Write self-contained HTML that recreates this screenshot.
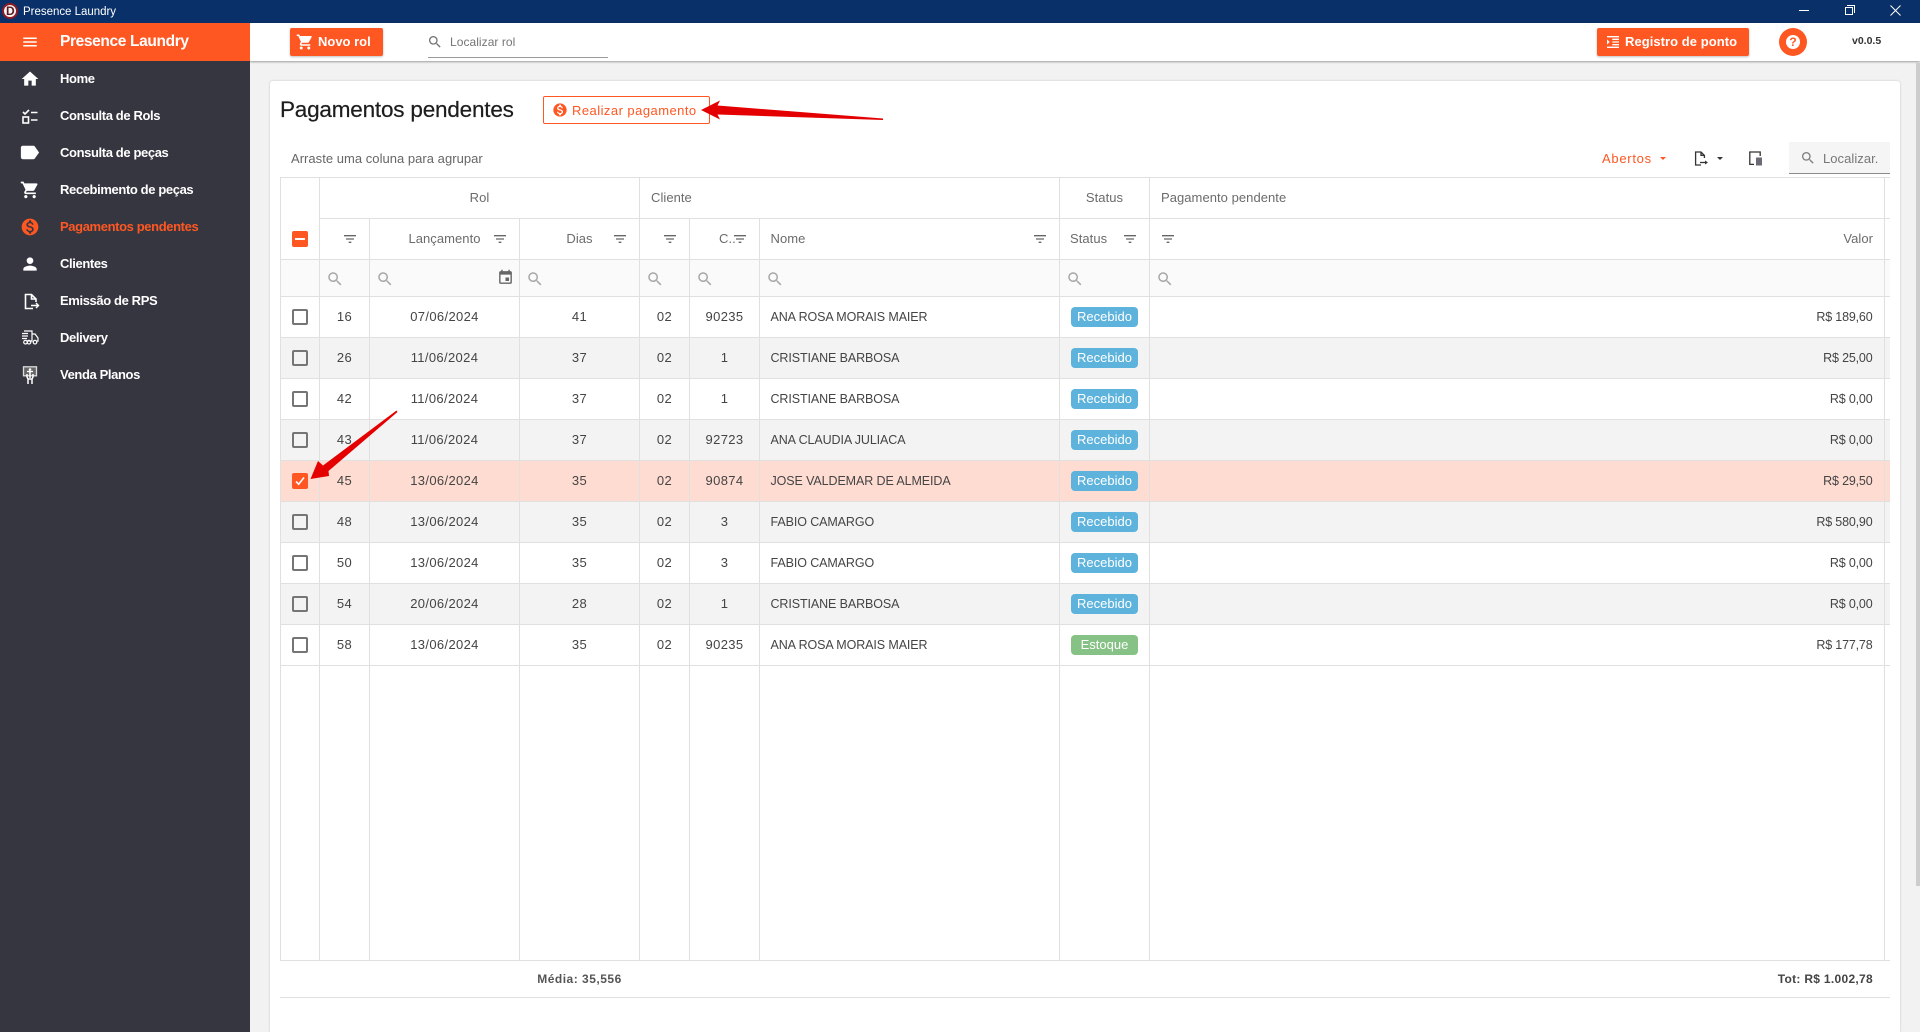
<!DOCTYPE html>
<html lang="pt-BR"><head><meta charset="utf-8"><title>Presence Laundry</title>
<style>
*{box-sizing:border-box}
html,body{margin:0;padding:0;width:1920px;height:1032px;overflow:hidden;background:#f2f2f2;font-family:"Liberation Sans",sans-serif;color:#444}
.a,.t,.l,.h,svg{position:absolute}
.t{white-space:nowrap;line-height:16px;height:16px}
.l{background:#e0e0e0}
.h{background:#e0e0e0;height:1px}
svg{display:block}
.m{left:60px;font-weight:700;font-size:13px;color:#fff;letter-spacing:-.38px}
.s{left:0;width:250px;height:1px;background:#4c4c55}
.hd{font-size:13px;color:#6b6b6b;letter-spacing:.05px;text-align:center}
.rw{position:absolute;left:281px;width:1609px;height:40px}
.g{background:#f3f3f3}
.rw .t{top:12px;font-size:13px;color:#444;letter-spacing:.35px;text-align:center}
.c1{left:39px;width:49px}.c2{left:89px;width:149px}.c3{left:239px;width:119px}.c4{left:359px;width:49px}.c5{left:409px;width:69px}
.rw .c6{left:489.5px;text-align:left;letter-spacing:-.1px;font-size:12.5px}
.rw .c7{right:17.5px;text-align:right;letter-spacing:-.17px;font-size:12.5px}
.b{position:absolute;left:790px;top:10px;width:67px;height:20px;border-radius:4px;background:#5eb3dc;color:#fff;font-size:13px;line-height:20px;text-align:center;letter-spacing:0}
.e{background:#86c285}
.cb{position:absolute;left:11px;top:12px;width:16px;height:16px;border:2px solid #757575;border-radius:2px;background:transparent}
</style></head><body>
<svg width="0" height="0" style="position:absolute"><defs>
<path id="ms" d="M15.5 14h-.79l-.28-.27C15.41 12.59 16 11.11 16 9.5 16 5.91 13.09 3 9.5 3S3 5.91 3 9.5 5.91 16 9.5 16c1.61 0 3.09-.59 4.23-1.57l.27.28v.79l5 4.99L20.49 19l-4.99-5zm-6 0C7.01 14 5 11.99 5 9.5S7.01 5 9.5 5 14 7.01 14 9.5 11.99 14 9.5 14z"/>
<path id="mf" d="M10 18h4v-2h-4v2zM3 6v2h18V6H3zm3 7h12v-2H6v2z"/>
<path id="mm" d="M12 2C6.48 2 2 6.48 2 12s4.48 10 10 10 10-4.48 10-10S17.52 2 12 2zm1.41 16.09V20h-2.67v-1.93c-1.71-.36-3.16-1.46-3.27-3.4h1.96c.1 1.05.82 1.87 2.65 1.87 1.96 0 2.4-.98 2.4-1.59 0-.83-.44-1.61-2.67-2.14-2.48-.6-4.18-1.62-4.18-3.67 0-1.72 1.39-2.84 3.11-3.21V4h2.67v1.95c1.86.45 2.79 1.86 2.85 3.39H14.3c-.05-1.11-.64-1.87-2.22-1.87-1.5 0-2.4.68-2.4 1.64 0 .84.65 1.39 2.67 1.91s4.18 1.39 4.18 3.91c-.01 1.83-1.38 2.83-3.12 3.16z"/>
<path id="mc" d="M7 18c-1.1 0-1.99.9-1.99 2S5.9 22 7 22s2-.9 2-2-.9-2-2-2zM1 2v2h2l3.6 7.59-1.35 2.45c-.16.28-.25.61-.25.96 0 1.1.9 2 2 2h12v-2H7.42c-.14 0-.25-.11-.25-.25l.03-.12.9-1.63h7.45c.75 0 1.41-.41 1.75-1.03l3.58-6.49c.08-.14.12-.31.12-.48 0-.55-.45-1-1-1H5.21l-.94-2H1zm16 16c-1.1 0-1.99.9-1.99 2s.89 2 1.99 2 2-.9 2-2-.9-2-2-2z"/>
</defs></svg>

<!-- title bar -->
<div class="a" style="left:0;top:0;width:1920px;height:23px;background:#093068"></div>
<div class="a" style="left:2px;top:3px;width:16px;height:16px;border-radius:50%;background:#8c1c24"></div>
<div class="a" style="left:4px;top:5px;width:12px;height:12px;border-radius:50%;background:#f4f4f4"></div>
<div class="t" style="left:6px;top:3px;font-size:12px;font-weight:700;color:#5a1a22">D</div>
<div class="t" style="left:23px;top:4px;font-size:11.5px;color:#fff;letter-spacing:-.02px">Presence Laundry</div>
<div class="a" style="left:1799px;top:10px;width:10px;height:1px;background:#fff"></div>
<div class="a" style="left:1845px;top:7px;width:8px;height:8px;border:1px solid #fff"></div>
<div class="a" style="left:1847px;top:5px;width:8px;height:8px;border:1px solid #fff;border-left:0;border-bottom:0"></div>
<svg style="left:1890px;top:5px" width="11" height="11" viewBox="0 0 11 11"><path d="M.5.5l10 10M10.5.5l-10 10" stroke="#fff" fill="none"/></svg>

<!-- header -->
<div class="a" style="left:250px;top:23px;width:1670px;height:38px;background:#fff;box-shadow:0 1px 2px rgba(0,0,0,.35)"></div>
<div class="a" style="left:290px;top:28px;width:93px;height:28px;background:#ff5722;border-radius:2px;box-shadow:0 1px 2px rgba(0,0,0,.25)"></div>
<svg style="left:296px;top:33px" width="18" height="18" viewBox="0 0 24 24" fill="#fff"><use href="#mc"/></svg>
<div class="t" style="left:318px;top:34px;font-size:13px;font-weight:700;color:#fff">Novo rol</div>
<svg style="left:427px;top:34px" width="16" height="16" viewBox="0 0 24 24" fill="#757575"><use href="#ms"/></svg>
<div class="t" style="left:450px;top:34px;font-size:12px;color:#757575;letter-spacing:.05px">Localizar rol</div>
<div class="a" style="left:428px;top:57px;width:180px;height:1px;background:#999"></div>
<div class="a" style="left:1597px;top:28px;width:152px;height:28px;background:#ff5722;border-radius:2px;box-shadow:0 1px 2px rgba(0,0,0,.25)"></div>
<svg style="left:1605px;top:34px" width="16" height="16" viewBox="0 0 24 24" fill="#fff"><path d="M3 21h18v-2H3v2zM3 8v8l4-4-4-4zm8 9h10v-2H11v2zM3 3v2h18V3H3zm8 6h10V7H11v2zm0 4h10v-2H11v2z"/></svg>
<div class="t" style="left:1625px;top:34px;font-size:13px;font-weight:700;color:#fff;letter-spacing:.05px">Registro de ponto</div>
<div class="a" style="left:1779px;top:28px;width:28px;height:28px;border-radius:50%;background:#ff5722"></div>
<div class="a" style="left:1786px;top:35px;width:14px;height:14px;border-radius:50%;background:#fff"></div>
<div class="t" style="left:1786px;top:34px;width:14px;text-align:center;font-size:12px;font-weight:700;color:#ff5722">?</div>
<div class="t" style="left:1852px;top:33px;font-size:10.5px;font-weight:700;color:#333">v0.0.5</div>

<!-- sidebar -->
<div class="a" style="left:0;top:23px;width:250px;height:1009px;background:#363640"></div>
<div class="a" style="left:0;top:23px;width:250px;height:38px;background:#ff5722"></div>
<svg style="left:21px;top:33px" width="18" height="18" viewBox="0 0 24 24" fill="#fff"><path d="M3 18h18v-2H3v2zm0-5h18v-2H3v2zm0-7v2h18V6H3z"/></svg>
<div class="t" style="left:60px;top:34px;font-size:15.5px;font-weight:700;color:#fff;letter-spacing:-.36px">Presence Laundry</div>
<div class="s" style="top:97px"></div><div class="s" style="top:134px"></div><div class="s" style="top:171px"></div><div class="s" style="top:208px"></div><div class="s" style="top:245px"></div><div class="s" style="top:282px"></div><div class="s" style="top:319px"></div><div class="s" style="top:356px"></div><div class="s" style="top:393px"></div>
<div class="t m" style="top:71px">Home</div>
<div class="t m" style="top:108px">Consulta de Rols</div>
<div class="t m" style="top:145px">Consulta de peças</div>
<div class="t m" style="top:182px">Recebimento de peças</div>
<div class="t m" style="top:219px;color:#ff5722">Pagamentos pendentes</div>
<div class="t m" style="top:256px">Clientes</div>
<div class="t m" style="top:293px">Emissão de RPS</div>
<div class="t m" style="top:330px">Delivery</div>
<div class="t m" style="top:367px">Venda Planos</div>
<svg style="left:20px;top:69px" width="20" height="20" viewBox="0 0 24 24" fill="#fff"><path d="M10 20v-6h4v6h5v-8h3L12 3 2 12h3v8z"/></svg>
<svg style="left:22px;top:109px" width="16" height="15" viewBox="0 0 16 15"><path d="M1 3l2 2 4-4M9 3.5h6.5M9 11h6.5" stroke="#fff" stroke-width="1.6" fill="none"/><rect x="1" y="8" width="5.5" height="6" stroke="#fff" stroke-width="1.6" fill="none"/></svg>
<svg style="left:18px;top:141px" width="23" height="23" viewBox="0 0 24 24" fill="#fff"><path d="M17.63 5.84C17.27 5.33 16.67 5 16 5L5 5.01C3.9 5.01 3 5.9 3 7v10c0 1.1.9 1.99 2 1.99L16 19c.67 0 1.27-.33 1.63-.84L22 12l-4.37-6.16z"/></svg>
<svg style="left:20px;top:180px" width="20" height="20" viewBox="0 0 24 24" fill="#fff"><use href="#mc"/></svg>
<svg style="left:20px;top:217px" width="20" height="20" viewBox="0 0 24 24" fill="#ff5722"><use href="#mm"/></svg>
<svg style="left:20px;top:254px" width="20" height="20" viewBox="0 0 24 24" fill="#fff"><path d="M12 12c2.21 0 4-1.79 4-4s-1.79-4-4-4-4 1.79-4 4 1.79 4 4 4zm0 2c-2.67 0-8 1.34-8 4v2h16v-2c0-2.66-5.33-4-8-4z"/></svg>
<svg style="left:24px;top:293px" width="16" height="17" viewBox="0 0 16 17"><path d="M9 15.5H1.5V1.5H7.5L12 6v3M7.5 1.5V6H12" stroke="#fff" stroke-width="1.6" fill="none"/><path d="M7 12.5h7M12 10l2.5 2.5L12 15" stroke="#fff" stroke-width="1.4" fill="none"/></svg>
<svg style="left:22px;top:330px" width="17" height="15" viewBox="0 0 17 15" fill="none" stroke="#fff" stroke-width="1.2"><path d="M2 1h8v10H5M10 4h3l3 4v3h-1M8 11h2"/><path d="M0 3.5h6M0 6h6M0 8.5h5"/><circle cx="3.5" cy="12.2" r="1.8"/><circle cx="7" cy="12.2" r="1.8"/><circle cx="13" cy="12.2" r="1.8"/></svg>
<svg style="left:22px;top:366px" width="16" height="19" viewBox="0 0 16 19" fill="none" stroke="#ddd" stroke-width="1.3"><rect x="1.5" y=".8" width="13" height="9" fill="#666"/><path d="M5 5.5h6" stroke="#fff"/><circle cx="8" cy="3.5" r="1.3" fill="#fff" stroke="none"/><path d="M5 8v3l1 2v5M11 8v3l-1 2v5M6 13h4M8 6v6" stroke="#fff" stroke-width="1.5"/></svg>

<!-- scrollbar + card -->
<div class="a" style="left:1916px;top:63px;width:4px;height:823px;background:#cdcdcd"></div>
<div class="a" style="left:270px;top:81px;width:1630px;height:951px;background:#fff;border-radius:3px 3px 0 0;box-shadow:0 0 2px rgba(0,0,0,.2)"></div>

<div class="t" style="left:280px;top:96px;height:28px;line-height:28px;font-size:22.5px;color:#1d1d1d;letter-spacing:-.2px;-webkit-text-stroke:.2px #1d1d1d">Pagamentos pendentes</div>
<div class="a" style="left:543px;top:96px;width:167px;height:28px;border:1px solid #ff5722;border-radius:2px;background:#fff"></div>
<svg style="left:552px;top:102px" width="16" height="16" viewBox="0 0 24 24" fill="#ff5722"><use href="#mm"/></svg>
<div class="t" style="left:572px;top:102.5px;font-size:13px;color:#ff5722;letter-spacing:.46px">Realizar pagamento</div>

<div class="t" style="left:291px;top:151px;font-size:13px;color:#666;letter-spacing:.03px">Arraste uma coluna para agrupar</div>
<div class="t" style="left:1602px;top:151px;font-size:13px;color:#ff5722;letter-spacing:.72px">Abertos</div>
<svg style="left:1660px;top:157px" width="6" height="3" viewBox="0 0 8 4"><path d="M0 0h8L4 4z" fill="#ff5722"/></svg>
<svg style="left:1694px;top:151px" width="15" height="15" viewBox="0 0 15 15" fill="none" stroke="#333" stroke-width="1.3"><path d="M7 14H1.6V1H7l3.4 3.4V7M7 1v3.4h3.4"/><path d="M6 11.5h6" stroke-width="1.3"/><path d="M11 9.5l3 2-3 2z" fill="#333" stroke="none"/></svg>
<svg style="left:1717px;top:157px" width="6" height="3" viewBox="0 0 8 4"><path d="M0 0h8L4 4z" fill="#333"/></svg>
<svg style="left:1749px;top:151px" width="14" height="15" viewBox="0 0 14 15"><path d="M5 13.4H.8V1h10.4v4" stroke="#333" stroke-width="1.3" fill="none"/><rect x="7" y="6.5" width="6" height="8" fill="#6b6b75"/></svg>
<div class="a" style="left:1789px;top:142px;width:101px;height:32px;background:#f5f5f5;border-bottom:1px solid #8a8a8a"></div>
<svg style="left:1800px;top:150px" width="16" height="16" viewBox="0 0 24 24" fill="#808080"><use href="#ms"/></svg>
<div class="t" style="left:1823px;top:151px;font-size:13px;color:#777;letter-spacing:.05px">Localizar.</div>

<!-- table backgrounds -->
<div class="a" style="left:281px;top:260px;width:1609px;height:36px;background:#fafafa"></div>

<!-- rows -->
<div class="rw" style="top:297px"><span class="cb"></span><span class="t c1">16</span><span class="t c2">07/06/2024</span><span class="t c3">41</span><span class="t c4">02</span><span class="t c5">90235</span><span class="t c6">ANA ROSA MORAIS MAIER</span><span class="b">Recebido</span><span class="t c7">R$ 189,60</span></div>
<div class="rw g" style="top:338px"><span class="cb"></span><span class="t c1">26</span><span class="t c2">11/06/2024</span><span class="t c3">37</span><span class="t c4">02</span><span class="t c5">1</span><span class="t c6">CRISTIANE BARBOSA</span><span class="b">Recebido</span><span class="t c7">R$ 25,00</span></div>
<div class="rw" style="top:379px"><span class="cb"></span><span class="t c1">42</span><span class="t c2">11/06/2024</span><span class="t c3">37</span><span class="t c4">02</span><span class="t c5">1</span><span class="t c6">CRISTIANE BARBOSA</span><span class="b">Recebido</span><span class="t c7">R$ 0,00</span></div>
<div class="rw g" style="top:420px"><span class="cb"></span><span class="t c1">43</span><span class="t c2">11/06/2024</span><span class="t c3">37</span><span class="t c4">02</span><span class="t c5">92723</span><span class="t c6">ANA CLAUDIA JULIACA</span><span class="b">Recebido</span><span class="t c7">R$ 0,00</span></div>
<div class="rw" style="top:461px;background:#ffdcd2"><span class="cb" style="background:#ff5722;border-color:#ff5722"></span><span class="t c1">45</span><span class="t c2">13/06/2024</span><span class="t c3">35</span><span class="t c4">02</span><span class="t c5">90874</span><span class="t c6">JOSE VALDEMAR DE ALMEIDA</span><span class="b">Recebido</span><span class="t c7">R$ 29,50</span></div>
<div class="rw g" style="top:502px"><span class="cb"></span><span class="t c1">48</span><span class="t c2">13/06/2024</span><span class="t c3">35</span><span class="t c4">02</span><span class="t c5">3</span><span class="t c6">FABIO CAMARGO</span><span class="b">Recebido</span><span class="t c7">R$ 580,90</span></div>
<div class="rw" style="top:543px"><span class="cb"></span><span class="t c1">50</span><span class="t c2">13/06/2024</span><span class="t c3">35</span><span class="t c4">02</span><span class="t c5">3</span><span class="t c6">FABIO CAMARGO</span><span class="b">Recebido</span><span class="t c7">R$ 0,00</span></div>
<div class="rw g" style="top:584px"><span class="cb"></span><span class="t c1">54</span><span class="t c2">20/06/2024</span><span class="t c3">28</span><span class="t c4">02</span><span class="t c5">1</span><span class="t c6">CRISTIANE BARBOSA</span><span class="b">Recebido</span><span class="t c7">R$ 0,00</span></div>
<div class="rw" style="top:625px"><span class="cb"></span><span class="t c1">58</span><span class="t c2">13/06/2024</span><span class="t c3">35</span><span class="t c4">02</span><span class="t c5">90235</span><span class="t c6">ANA ROSA MORAIS MAIER</span><span class="b e">Estoque</span><span class="t c7">R$ 177,78</span></div>
<svg style="left:295px;top:476px" width="10" height="10" viewBox="0 0 10 10"><path d="M1 5.5l2.7 2.7L9 1.5" stroke="#fff" stroke-width="1.6" fill="none"/></svg>

<!-- grid lines -->
<div class="h" style="left:280px;top:177px;width:1610px"></div>
<div class="h" style="left:320px;top:218px;width:1570px"></div>
<div class="h" style="left:280px;top:259px;width:1610px"></div>
<div class="h" style="left:280px;top:296px;width:1610px"></div>
<div class="h" style="left:280px;top:337px;width:1610px"></div>
<div class="h" style="left:280px;top:378px;width:1610px"></div>
<div class="h" style="left:280px;top:419px;width:1610px"></div>
<div class="h" style="left:280px;top:460px;width:1610px"></div>
<div class="h" style="left:280px;top:501px;width:1610px"></div>
<div class="h" style="left:280px;top:542px;width:1610px"></div>
<div class="h" style="left:280px;top:583px;width:1610px"></div>
<div class="h" style="left:280px;top:624px;width:1610px"></div>
<div class="h" style="left:280px;top:665px;width:1610px"></div>
<div class="h" style="left:280px;top:960px;width:1610px"></div>
<div class="h" style="left:280px;top:997px;width:1610px"></div>
<div class="l" style="left:280px;top:177px;width:1px;height:783px"></div>
<div class="l" style="left:319px;top:177px;width:1px;height:783px"></div>
<div class="l" style="left:369px;top:218px;width:1px;height:742px"></div>
<div class="l" style="left:519px;top:218px;width:1px;height:742px"></div>
<div class="l" style="left:639px;top:177px;width:1px;height:783px"></div>
<div class="l" style="left:689px;top:218px;width:1px;height:742px"></div>
<div class="l" style="left:759px;top:218px;width:1px;height:742px"></div>
<div class="l" style="left:1059px;top:177px;width:1px;height:783px"></div>
<div class="l" style="left:1149px;top:177px;width:1px;height:783px"></div>
<div class="l" style="left:1884px;top:177px;width:1px;height:783px"></div>

<!-- headers -->
<div class="t hd" style="left:320px;top:190px;width:319px">Rol</div>
<div class="t hd" style="left:651px;top:190px">Cliente</div>
<div class="t hd" style="left:1060px;top:190px;width:89px">Status</div>
<div class="t hd" style="left:1161px;top:190px">Pagamento pendente</div>
<div class="t hd" style="left:370px;top:231px;width:149px">Lançamento</div>
<div class="t hd" style="left:520px;top:231px;width:119px">Dias</div>
<div class="t hd" style="left:719px;top:231px">C..</div>
<div class="t hd" style="left:770.5px;top:231px">Nome</div>
<div class="t hd" style="left:1070px;top:231px">Status</div>
<div class="t hd" style="right:47px;top:231px">Valor</div>

<svg style="left:342px;top:231px" width="16" height="16" viewBox="0 0 24 24" fill="#666"><use href="#mf"/></svg>
<svg style="left:492px;top:231px" width="16" height="16" viewBox="0 0 24 24" fill="#666"><use href="#mf"/></svg>
<svg style="left:612px;top:231px" width="16" height="16" viewBox="0 0 24 24" fill="#666"><use href="#mf"/></svg>
<svg style="left:662px;top:231px" width="16" height="16" viewBox="0 0 24 24" fill="#666"><use href="#mf"/></svg>
<svg style="left:732px;top:231px" width="16" height="16" viewBox="0 0 24 24" fill="#666"><use href="#mf"/></svg>
<svg style="left:1032px;top:231px" width="16" height="16" viewBox="0 0 24 24" fill="#666"><use href="#mf"/></svg>
<svg style="left:1122px;top:231px" width="16" height="16" viewBox="0 0 24 24" fill="#666"><use href="#mf"/></svg>
<svg style="left:1160px;top:231px" width="16" height="16" viewBox="0 0 24 24" fill="#666"><use href="#mf"/></svg>

<svg style="left:326px;top:270px" width="18" height="18" viewBox="0 0 24 24" fill="#a8a8a8"><use href="#ms"/></svg>
<svg style="left:376px;top:270px" width="18" height="18" viewBox="0 0 24 24" fill="#a8a8a8"><use href="#ms"/></svg>
<svg style="left:526px;top:270px" width="18" height="18" viewBox="0 0 24 24" fill="#a8a8a8"><use href="#ms"/></svg>
<svg style="left:646px;top:270px" width="18" height="18" viewBox="0 0 24 24" fill="#a8a8a8"><use href="#ms"/></svg>
<svg style="left:696px;top:270px" width="18" height="18" viewBox="0 0 24 24" fill="#a8a8a8"><use href="#ms"/></svg>
<svg style="left:766px;top:270px" width="18" height="18" viewBox="0 0 24 24" fill="#a8a8a8"><use href="#ms"/></svg>
<svg style="left:1066px;top:270px" width="18" height="18" viewBox="0 0 24 24" fill="#a8a8a8"><use href="#ms"/></svg>
<svg style="left:1156px;top:270px" width="18" height="18" viewBox="0 0 24 24" fill="#a8a8a8"><use href="#ms"/></svg>
<svg style="left:497px;top:269px" width="17" height="17" viewBox="0 0 24 24" fill="#666"><path d="M17 12h-5v5h5v-5zM16 1v2H8V1H6v2H5c-1.11 0-1.99.9-1.99 2L3 19c0 1.1.89 2 2 2h14c1.1 0 2-.9 2-2V5c0-1.1-.9-2-2-2h-1V1h-2zm3 18H5V8h14v11z"/></svg>

<div class="a" style="left:292px;top:231px;width:16px;height:16px;background:#ff5722;border-radius:2px"></div>
<div class="a" style="left:295px;top:238px;width:10px;height:2px;background:#fff"></div>

<!-- footer -->
<div class="t" style="left:520px;top:971px;width:119px;text-align:center;font-size:12px;font-weight:700;color:#555;letter-spacing:.5px">Média: 35,556</div>
<div class="t" style="right:47px;top:971px;font-size:12px;font-weight:700;color:#444;letter-spacing:.3px">Tot: R$ 1.002,78</div>

<!-- arrows -->
<svg style="left:0;top:0" width="1920" height="1032" viewBox="0 0 1920 1032">
<path d="M701 110L720 100.5L717.5 105.5L883 118.5L883 120L717.5 114.5L720 119.5Z" fill="#e40000"/>
<path d="M310.5 479L318 461L323 465.5L396.5 410.5L397.5 412L328.5 471L329 476Z" fill="#e40000"/>
</svg>
</body></html>
